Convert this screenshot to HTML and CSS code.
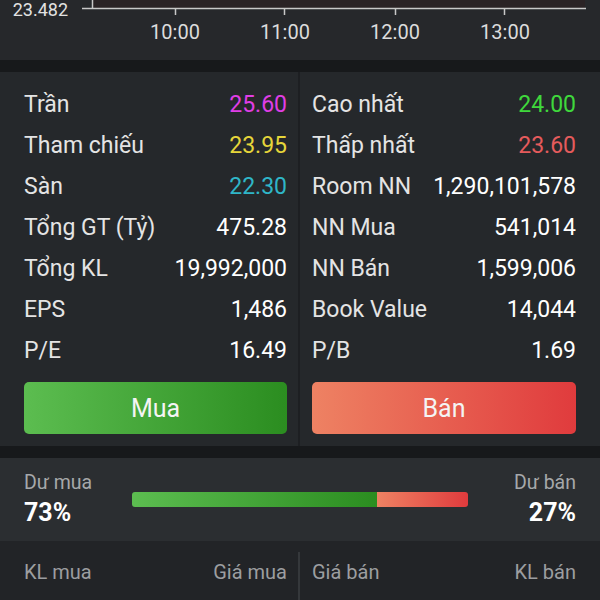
FILE: index.html
```html
<!DOCTYPE HTML>
<html>
<head>
<meta charset="utf-8">
<title>Chi tiết mã</title>
<link rel="stylesheet" href="styles.css">
</head>
<body>
<div class="chart">
	<svg width="600" height="60" viewBox="0 0 600 60">
		<rect class="plot" x="92" y="0" width="493" height="8"/>
		<line class="axis" x1="82" y1="8.5" x2="586" y2="8.5"/>
		<line class="axis" x1="92.5" y1="0" x2="92.5" y2="8"/>
		<line class="tick" x1="175.5" y1="9" x2="175.5" y2="15"/>
		<line class="tick" x1="284.5" y1="9" x2="284.5" y2="15"/>
		<line class="tick" x1="395.5" y1="9" x2="395.5" y2="15"/>
		<line class="tick" x1="504.5" y1="9" x2="504.5" y2="15"/>
		<text class="ylabel" x="68" y="16" text-anchor="end">23.482</text>
		<text class="xlabel" x="175" y="39" text-anchor="middle">10:00</text>
		<text class="xlabel" x="285" y="39" text-anchor="middle">11:00</text>
		<text class="xlabel" x="395" y="39" text-anchor="middle">12:00</text>
		<text class="xlabel" x="505" y="39" text-anchor="middle">13:00</text>
	</svg>
</div>

<div class="stats">
	<div class="col col-left">
		<p class="row"><span>Trần</span><span class="ceil">25.60</span></p>
		<p class="row"><span>Tham chiếu</span><span class="ref">23.95</span></p>
		<p class="row"><span>Sàn</span><span class="floor">22.30</span></p>
		<p class="row"><span>Tổng GT (Tỷ)</span><span>475.28</span></p>
		<p class="row"><span>Tổng KL</span><span>19,992,000</span></p>
		<p class="row"><span>EPS</span><span>1,486</span></p>
		<p class="row"><span>P/E</span><span>16.49</span></p>
		<button class="btn btn-buy">Mua</button>
	</div>
	<div class="col col-right">
		<p class="row"><span>Cao nhất</span><span class="up">24.00</span></p>
		<p class="row"><span>Thấp nhất</span><span class="down">23.60</span></p>
		<p class="row"><span>Room NN</span><span>1,290,101,578</span></p>
		<p class="row"><span>NN Mua</span><span>541,014</span></p>
		<p class="row"><span>NN Bán</span><span>1,599,006</span></p>
		<p class="row"><span>Book Value</span><span>14,044</span></p>
		<p class="row"><span>P/B</span><span>1.69</span></p>
		<button class="btn btn-sell">Bán</button>
	</div>
</div>

<div class="balance">
	<div class="side">
		<span class="side-title">Dư mua</span>
		<span class="side-pct">73%</span>
	</div>
	<div class="bar">
		<div class="bar-buy" style="width:73%"></div>
		<div class="bar-sell"></div>
	</div>
	<div class="side side-right">
		<span class="side-title">Dư bán</span>
		<span class="side-pct">27%</span>
	</div>
</div>

<div class="book">
	<div class="book-col book-left">
		<span>KL mua</span><span>Giá mua</span>
	</div>
	<div class="book-col book-right">
		<span>Giá bán</span><span>KL bán</span>
	</div>
</div>
</body>
</html>
```

FILE: styles.css
```css
html, body {
	margin: 0;
	padding: 0;
	height: 600px;
	overflow: hidden;
	background: #222427;
	font-family: Roboto, "Noto Sans", sans-serif;
}

/* chart */
.chart {
	height: 60px;
	background: #26282b;
	border-bottom: 12px solid #17191b;
}
.chart svg {
	display: block;
}
.plot {
	fill: #2a2325;
}
.axis, .tick {
	stroke: #c8c8c8;
	stroke-width: 1.5;
}
.ylabel {
	fill: #e2e2e2;
	font-size: 18px;
	font-family: Roboto, sans-serif;
}
.xlabel {
	fill: #dcdcdc;
	font-size: 20px;
	font-family: Roboto, sans-serif;
}

/* stats */
.stats {
	display: grid;
	grid-template-columns: 1fr 1fr;
	background: #25282b;
	border-bottom: 12px solid #17191b;
}
.col {
	padding: 12px 11px 12px 24px;
}
.col-left {
	border-right: 2px solid #1d1f22;
}
.col-right {
	padding: 12px 24px 12px 12px;
}
.row {
	display: flex;
	justify-content: space-between;
	align-items: center;
	margin: 0;
	height: 41px;
	font-size: 23px;
	color: #e4e4e4;
	white-space: nowrap;
}
.row span:last-child {
	color: #fff;
}
.row .ceil { color: #e03ee6 !important; }
.row .ref { color: #e6d63a !important; }
.row .floor { color: #2fb6c8 !important; }
.row .up { color: #3fd83c !important; }
.row .down { color: #e55b5c !important; }

.btn {
	display: block;
	width: 100%;
	height: 52px;
	margin-top: 11px;
	border: none;
	border-radius: 5px;
	color: #f4f4f4;
	font-family: Roboto, sans-serif;
	font-size: 25px;
}
.btn-buy {
	background: linear-gradient(to right, #5cbd50, #2b8d20);
}
.btn-sell {
	background: linear-gradient(to right, #ee8263, #e03b3d);
}

/* du mua / du ban */
.balance {
	display: flex;
	align-items: center;
	height: 83px;
	padding: 0 24px;
	background: #2b2e31;
}
.side {
	display: flex;
	flex-direction: column;
	width: 108px;
}
.side-right {
	align-items: flex-end;
}
.side-title {
	font-size: 19.5px;
	color: #a6a8aa;
	line-height: 26px;
}
.side-pct {
	font-size: 25px;
	font-weight: bold;
	color: #fff;
	line-height: 34px;
}
.bar {
	flex: 1;
	display: flex;
	height: 15px;
	border-radius: 3px;
	overflow: hidden;
}
.bar-buy {
	background: linear-gradient(to right, #5cbd50, #2b8d20);
}
.bar-sell {
	flex: 1;
	background: linear-gradient(to right, #ee8263, #e03b3d);
}

/* order book header */
.book {
	display: grid;
	grid-template-columns: 1fr 1fr;
	padding-top: 11px;
}
.book-col {
	display: flex;
	justify-content: space-between;
	padding: 8px 11px 0 24px;
	height: 60px;
	font-size: 20px;
	color: #9c9ea0;
}
.book-left {
	border-right: 2px solid #35383b;
}
.book-right {
	padding: 8px 24px 0 12px;
}
```
